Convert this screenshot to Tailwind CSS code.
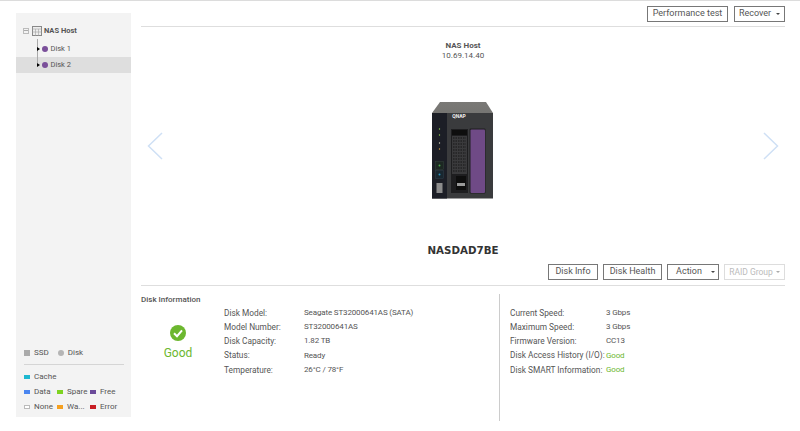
<!DOCTYPE html>
<html>
<head>
<meta charset="utf-8">
<script src="https://cdn.jsdelivr.net/npm/@tailwindcss/browser@4"></script>
</head>
<body class="bg-white">
<div class="w-[800px] h-[431px] overflow-hidden flex font-['Roboto',sans-serif] text-[#555] border-t border-[#dcdcdc] relative">
  <!-- Sidebar -->
  <aside class="w-[115px] h-[404px] ml-4 mt-3 bg-[#f3f3f3] flex flex-col shrink-0 text-[7.5px]">
    <div class="h-[28px] pt-[11px] pl-[7px] flex items-start">
      <div class="flex items-center h-[13px]">
        <span class="w-[6px] h-[6px] border border-[#bbb] mr-[3px] flex items-center justify-center"><span class="w-[4px] h-px bg-[#aaa]"></span></span>
        <svg width="10" height="10" viewBox="0 0 10 10" class="mr-[2px]"><rect x="0.5" y="0.5" width="9" height="9" fill="#eee" stroke="#888"/><path d="M0.5 3h9M3.5 3v6.5M6.5 3v6.5M0.5 6h9" stroke="#aaa" stroke-width="0.7"/></svg>
        <span class="font-bold text-[#555]">NAS Host</span>
      </div>
    </div>
    <div class="relative">
      <span class="absolute left-[21px] top-[-2px] w-px h-[24px] bg-[#aaa]"></span>
      <div class="h-[16px] flex items-center pl-[20.5px]">
        <span class="relative w-0 h-0 border-y-[2px] border-y-transparent border-l-[3px] border-l-black"></span>
        <span class="w-[6px] h-[6px] rounded-full bg-[#7a4f9a] ml-[2px] mr-[2px]"></span>
        <span class="ml-[1px]">Disk 1</span>
      </div>
      <div class="h-[16px] flex items-center pl-[20.5px] bg-[#dedede]">
        <span class="relative w-0 h-0 border-y-[2px] border-y-transparent border-l-[3px] border-l-black"></span>
        <span class="w-[6px] h-[6px] rounded-full bg-[#7a4f9a] ml-[2px] mr-[2px]"></span>
        <span class="ml-[1px]">Disk 2</span>
      </div>
    </div>
    <div class="mt-auto px-[8px] pb-[3px] text-[#555] text-[8px]">
      <div class="flex items-center h-[15px] relative top-[1px]">
        <span class="w-[6px] h-[6px] bg-[#aaa]"></span><span class="ml-[4px]">SSD</span>
        <span class="w-[6px] h-[6px] rounded-full bg-[#b5b5b5] ml-[9px]"></span><span class="ml-[4px]">Disk</span>
      </div>
      <div class="h-px bg-[#d5d5d5] w-[100px] mt-[5px] mb-[4px]"></div>
      <div class="flex items-center h-[15px]"><span class="w-[6px] h-[4px] bg-[#1eb8d0]"></span><span class="ml-[4px]">Cache</span></div>
      <div class="flex items-center h-[15px]">
        <span class="w-[6px] h-[4px] bg-[#4a86f0]"></span><span class="ml-[4px] w-[23px]">Data</span>
        <span class="w-[6px] h-[4px] bg-[#7ed321]"></span><span class="ml-[4px] w-[23px]">Spare</span>
        <span class="w-[6px] h-[4px] bg-[#6b4a9a]"></span><span class="ml-[4px]">Free</span>
      </div>
      <div class="flex items-center h-[15px]">
        <span class="w-[6px] h-[4px] bg-white border border-[#bbb]"></span><span class="ml-[4px] w-[23px]">None</span>
        <span class="w-[6px] h-[4px] bg-[#f5a020]"></span><span class="ml-[4px] w-[23px]">Wa...</span>
        <span class="w-[6px] h-[4px] bg-[#c81e24]"></span><span class="ml-[4px]">Error</span>
      </div>
    </div>
  </aside>

  <!-- Main -->
  <main class="w-[644px] ml-[10px] flex flex-col shrink-0 relative">
    <div class="h-[26px] border-b border-[#dedede] flex justify-end items-start pt-[5px] gap-[6px] text-[9px] text-[#555]">
      <button class="h-[16px] w-[81px] border border-[#777] flex items-center justify-center">Performance test</button>
      <button class="h-[16px] w-[51px] border border-[#777] flex items-center justify-center gap-[5px]">Recover <span class="w-0 h-0 border-x-[2px] border-x-transparent border-t-[2px] border-t-[#444]"></span></button>
    </div>

    <div class="h-[232px] flex flex-col items-center relative">
      <div class="mt-[14px] text-[8px] font-bold leading-[10px]">NAS Host</div>
      <div class="text-[8px] leading-[10px]">10.69.14.40</div>
      <svg width="16" height="28" viewBox="0 0 16 28" class="absolute left-[6px] top-[105px]"><path d="M15 1 L1.5 14 L15 27" fill="none" stroke="#cfe0f5" stroke-width="1.5"/></svg>
      <svg width="16" height="28" viewBox="0 0 16 28" class="absolute right-[6px] top-[105px]"><path d="M1 1 L14.5 14 L1 27" fill="none" stroke="#cfe0f5" stroke-width="1.5"/></svg>
      <svg width="62" height="97" viewBox="0 0 62 97" class="mt-[41px]">
        <defs><linearGradient id="top" x1="0" y1="0" x2="0" y2="1"><stop offset="0" stop-color="#7a7976"/><stop offset="1" stop-color="#565654"/></linearGradient></defs>
        <path d="M8 0 H54 L61 11 V96 H0 V11 Z" fill="url(#top)"/>
        <rect x="0" y="11" width="61" height="85.5" fill="#3a3b3d"/>
        <rect x="0" y="11" width="15" height="85.5" fill="#1c1e26"/>
        <rect x="19" y="27" width="17" height="64" fill="#1e1e20"/>
        <rect x="20" y="28" width="15" height="5" fill="#0e0e0e"/>
        <rect x="20" y="34" width="15" height="38" fill="#3a3a3c"/>
        <path d="M21 36h13M21 39h13M21 42h13M21 45h13M21 48h13M21 51h13M21 54h13M21 57h13M21 60h13M21 63h13M21 66h13M21 69h13" stroke="#161616" stroke-width="1" stroke-dasharray="1.5 1"/>
        <rect x="24" y="74" width="10" height="14" fill="#0e0e0e"/>
        <rect x="25" y="81" width="8" height="3" fill="#9a9a9a"/>
        <rect x="37.5" y="26.5" width="16" height="65" rx="1" fill="#1f1f21"/>
        <rect x="38.5" y="27.5" width="14.5" height="63.5" rx="1" fill="#6f4a86"/>
        <text x="27" y="15.8" font-size="5" font-weight="700" text-anchor="middle" fill="#f0f0f0" font-family="Roboto">QNAP</text>
        <circle cx="7.5" cy="27" r="0.7" fill="#8fd14f"/><circle cx="7.5" cy="33" r="0.7" fill="#8fd14f"/><circle cx="7.5" cy="41" r="0.7" fill="#d8d8c0"/><circle cx="7.5" cy="47" r="0.7" fill="#d8a040"/>
        <rect x="3.5" y="59.5" width="8" height="8" fill="#1c2722" stroke="#33423a" stroke-width="0.5"/><circle cx="7.5" cy="63.5" r="1" fill="#4aa84a"/>
        <rect x="3.5" y="68.5" width="8" height="8" fill="#18262f" stroke="#2f3f4a" stroke-width="0.5"/><circle cx="7.5" cy="72.5" r="1" fill="#2b93c0"/>
        <rect x="4.5" y="81" width="6" height="10" fill="#8c8c8c"/>
      </svg>
      <div class="absolute top-[216px] left-0 w-full text-center font-['DejaVu_Sans',sans-serif] font-bold text-[10.3px] leading-[14px] text-[#333]">NASDAD7BE</div>
    </div>

    <div class="h-[27px] border-b border-[#dedede] flex justify-end items-start pt-[5px] gap-[5px] text-[9px]">
      <button class="h-[16px] w-[50px] border border-[#777] flex items-center justify-center">Disk Info</button>
      <button class="h-[16px] w-[59px] border border-[#777] flex items-center justify-center">Disk Health</button>
      <button class="h-[16px] w-[52px] border border-[#777] flex items-center justify-center gap-[9px] pl-[5px]">Action <span class="w-0 h-0 border-x-[2px] border-x-transparent border-t-[2px] border-t-[#444]"></span></button>
      <button class="h-[16px] w-[61px] border border-[#ddd] text-[#bbb] text-[8.5px] flex items-center justify-center gap-[3px]">RAID Group <span class="w-0 h-0 border-x-[2px] border-x-transparent border-t-[2px] border-t-[#aaa]"></span></button>
    </div>

    <div class="flex flex-1 text-[8.3px]">
      <section class="w-[359px] border-r border-[#ccc] mt-[8px] relative h-[127px]">
        <div class="text-[8px] font-medium leading-[10px] mt-[1px]">Disk Information</div>
        <div class="flex">
          <div class="w-[74px] mr-[9px] flex flex-col items-center pt-[20px]">
            <svg width="16" height="16" viewBox="0 0 16 16"><circle cx="8" cy="8" r="8" fill="#6cb72f"/><path d="M4 8.2 L7 11.2 L12 5.3" fill="none" stroke="#fff" stroke-width="2"/></svg>
            <span class="text-[12px] text-[#6cb72f] leading-[15px] mt-[5px]">Good</span>
          </div>
          <dl class="grid grid-cols-[80px_auto] auto-rows-[14.2px] items-center mt-[1px]">
            <dt>Disk Model:</dt><dd class="text-[8px] tracking-[-0.15px]">Seagate ST32000641AS (SATA)</dd>
            <dt>Model Number:</dt><dd class="text-[8px] tracking-[-0.15px]">ST32000641AS</dd>
            <dt>Disk Capacity:</dt><dd class="text-[8px] tracking-[-0.15px]">1.82 TB</dd>
            <dt>Status:</dt><dd class="text-[8px] tracking-[-0.15px]">Ready</dd>
            <dt>Temperature:</dt><dd class="text-[8px] tracking-[-0.15px]">26°C / 78°F</dd>
          </dl>
        </div>
      </section>
      <dl class="grid grid-cols-[96px_auto] auto-rows-[14.2px] items-center ml-[10px] mt-[20px] content-start whitespace-nowrap">
        <dt>Current Speed:</dt><dd class="text-[8px] tracking-[-0.15px]">3 Gbps</dd>
        <dt>Maximum Speed:</dt><dd class="text-[8px] tracking-[-0.15px]">3 Gbps</dd>
        <dt>Firmware Version:</dt><dd class="text-[8px] tracking-[-0.15px]">CC13</dd>
        <dt>Disk Access History (I/O):</dt><dd class="text-[8px] tracking-[-0.15px] text-[#6cb72f]">Good</dd>
        <dt>Disk SMART Information:</dt><dd class="text-[8px] tracking-[-0.15px] text-[#6cb72f]">Good</dd>
      </dl>
    </div>
  </main>
</div>
</body>
</html>
